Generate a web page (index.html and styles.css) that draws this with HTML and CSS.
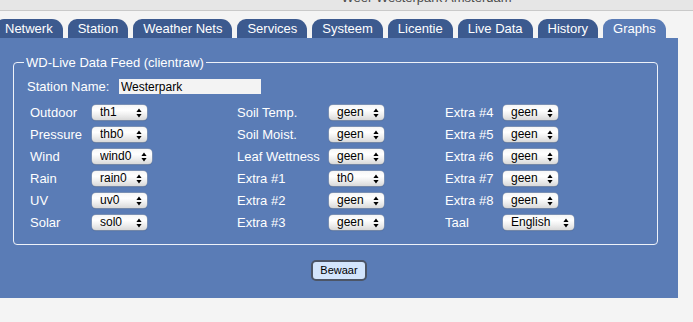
FILE: index.html
```html
<!DOCTYPE html>
<html lang="nl">
<head>
<meta charset="utf-8">
<title>Weer Westerpark Amsterdam</title>
<link rel="stylesheet" href="styles.css">
</head>
<body>
<div class="titlebar"><span class="title">Weer Westerpark Amsterdam</span></div>
<ul class="tabs">
  <li class="tab">Netwerk</li>
  <li class="tab">Station</li>
  <li class="tab">Weather Nets</li>
  <li class="tab">Services</li>
  <li class="tab">Systeem</li>
  <li class="tab">Licentie</li>
  <li class="tab">Live Data</li>
  <li class="tab">History</li>
  <li class="tab active">Graphs</li>
</ul>
<div class="panel">
  <fieldset class="feed">
    <legend class="feed-title">WD-Live Data Feed (clientraw)</legend>
    <div class="station-row">
      <label class="lbl station-lbl">Station Name:</label>
      <input class="station-input" type="text" value="Westerpark">
    </div>
    <div class="grid">
      <span class="lbl">Outdoor</span><select class="sel"><option>th1</option></select>
      <span class="lbl">Soil Temp.</span><select class="sel"><option>geen</option></select>
      <span class="lbl">Extra #4</span><select class="sel"><option>geen</option></select>

      <span class="lbl">Pressure</span><select class="sel"><option>thb0</option></select>
      <span class="lbl">Soil Moist.</span><select class="sel"><option>geen</option></select>
      <span class="lbl">Extra #5</span><select class="sel"><option>geen</option></select>

      <span class="lbl">Wind</span><select class="sel sel-wind"><option>wind0</option></select>
      <span class="lbl">Leaf Wettness</span><select class="sel"><option>geen</option></select>
      <span class="lbl">Extra #6</span><select class="sel"><option>geen</option></select>

      <span class="lbl">Rain</span><select class="sel"><option>rain0</option></select>
      <span class="lbl">Extra #1</span><select class="sel"><option>th0</option></select>
      <span class="lbl">Extra #7</span><select class="sel"><option>geen</option></select>

      <span class="lbl">UV</span><select class="sel"><option>uv0</option></select>
      <span class="lbl">Extra #2</span><select class="sel"><option>geen</option></select>
      <span class="lbl">Extra #8</span><select class="sel"><option>geen</option></select>

      <span class="lbl">Solar</span><select class="sel"><option>sol0</option></select>
      <span class="lbl">Extra #3</span><select class="sel"><option>geen</option></select>
      <span class="lbl">Taal</span><select class="sel sel-lang"><option>English</option></select>
    </div>
  </fieldset>
  <div class="actions"><button class="save" type="button">Bewaar</button></div>
</div>
</body>
</html>
```
FILE: styles.css
```css
html, body {
  margin: 0;
  padding: 0;
}
body {
  background: #f4f4f4;
  font-family: "Liberation Sans", Arial, Helvetica, sans-serif;
  width: 693px;
  height: 322px;
  overflow: hidden;
}
.titlebar {
  height: 10px;
  background: #e6e6e6;
  border-bottom: 1px solid #c9c9c9;
  overflow: hidden;
  text-align: center;
  padding-left: 160px;
}
.title {
  display: block;
  font-size: 13px;
  line-height: 13px;
  margin-top: -9px;
  color: #4a4a4a;
}
.tabs {
  list-style: none;
  margin: 8px 0 0 -5px;
  padding: 0;
  display: flex;
  gap: 5px;
}
.tab {
  background: #3c5a8f;
  color: #ffffff;
  font-size: 13px;
  line-height: 19px;
  height: 19px;
  padding: 0 10px;
  border-radius: 9px 11px 0 0;
  white-space: nowrap;
}
.tab.active {
  background: #5a7cb6;
}
.panel {
  width: 678px;
  box-sizing: border-box;
  background: #5a7cb6;
  padding: 17px 20px 17px 13px;
}
.feed {
  margin: 0;
  border: 1px solid #eef2f9;
  border-radius: 4px;
  padding: 9px 13px 14px 13px;
  min-width: 0;
}
.feed-title {
  color: #ffffff;
  font-size: 13px;
  line-height: 15px;
  padding: 0 2px;
  margin-left: -3px;
}
.lbl {
  color: #ffffff;
  font-size: 13px;
  line-height: 15px;
  white-space: nowrap;
}
.station-row {
  display: flex;
  align-items: center;
  height: 15px;
}
.station-lbl {
  width: 92px;
}
.station-input {
  width: 142px;
  height: 15px;
  box-sizing: border-box;
  border: none;
  background: #f3f3f3;
  padding: 0 2px;
  margin: 0;
  font-family: "Liberation Sans", Arial, sans-serif;
  font-size: 12px;
  color: #000000;
  outline: none;
}
.grid {
  display: grid;
  grid-template-columns: 62px 145px 92px 116px 58px auto;
  grid-auto-rows: 15px;
  row-gap: 7px;
  align-items: center;
  justify-items: start;
  margin: 11px 0 0 3px;
}
.sel {
  -webkit-appearance: none;
  appearance: none;
  width: 55px;
  height: 15px;
  box-sizing: border-box;
  margin: 0;
  border: none;
  border-radius: 4px;
  padding: 0 0 0 8px;
  font-family: "Liberation Sans", Arial, sans-serif;
  font-size: 12px;
  line-height: 15px;
  color: #000000;
  background-color: #eeeeee;
  background-image:
    url("data:image/svg+xml;utf8,<svg xmlns='http://www.w3.org/2000/svg' width='6' height='10' viewBox='0 0 6 10'><path d='M3 0.5 L5.6 4 L0.4 4 Z M3 9.5 L5.6 6 L0.4 6 Z' fill='black'/></svg>"),
    linear-gradient(to bottom, #f6f6f6 0%, #ffffff 35%, #f2f2f2 60%, #d9d9d9 100%);
  background-repeat: no-repeat, no-repeat;
  background-position: right 5px center, 0 0;
  background-size: 6px 10px, 100% 100%;
  box-shadow: 0 0 0 0.5px #9aa3b2, 0 1px 1px rgba(0, 0, 0, 0.15);
}
.sel-wind {
  width: 60px;
}
.sel-lang {
  width: 71px;
}
.actions {
  display: flex;
  justify-content: center;
  margin-top: 15px;
  padding-left: 7px;
}
.save {
  box-sizing: border-box;
  font-family: "Liberation Sans", Arial, sans-serif;
  font-size: 11px;
  line-height: 15px;
  height: 21px;
  padding: 0 7px;
  background: #d3e5fc;
  color: #000000;
  border: 2px solid #4c5566;
  border-radius: 5px;
}
```
